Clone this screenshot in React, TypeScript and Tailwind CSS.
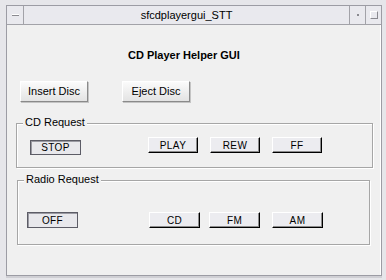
import React from 'react';

const font = "font-['Liberation_Sans',Arial,sans-serif]";

const raisedBtn =
  'h-[21px] w-[68px] text-[11px] text-black bg-gradient-to-b from-[#fbfbfb] to-[#e3e3e3] border border-t-white border-l-white border-r-[#8a8a8a] border-b-[#8a8a8a] shadow-[1px_1px_0_#c4c4c4] flex items-center justify-center';

const flatBtn =
  'h-[16px] text-[10px] tracking-[0.4px] text-black bg-[#ececf0] border border-t-white border-l-white border-r-black border-b-black shadow-[inset_-1px_-1px_0_#8c8c8c] flex items-center justify-center';

const pressedBtn =
  'h-[15px] text-[10px] tracking-[0.4px] text-black bg-[#e8e8ec] border border-[#5c5c66] shadow-[inset_1px_1px_0_#9a9aa2] flex items-center justify-center';

const GroupBox: React.FC<{ label: string; className: string; children: React.ReactNode }> = ({ label, className, children }) => (
  <div className={`relative border border-[#a6a6a6] shadow-[1px_1px_0_#ffffff,inset_1px_1px_0_#ffffff] ${className}`}>
    <span className="absolute -top-[8px] left-[6px] px-[2px] bg-[#f0f0f0] text-[11px] leading-[13px] text-black">
      {label}
    </span>
    {children}
  </div>
);

const App: React.FC = () => {
  return (
    <div className={`w-[386px] h-[280px] bg-[#e6e6ea] pt-[5px] pl-[6px] ${font}`}>
      <div className="w-[376px] h-[271px] border border-[#9c9ca4] shadow-[0_2px_0_#cfcfd4] flex flex-col">
        {/* Title bar */}
        <div className="h-[19px] flex bg-[#e9e9ee] border-b border-[#a2a2a8]">
          <div className="w-[17px] border-r border-[#a2a2a8] flex items-center justify-center">
            <div className="w-[7px] h-[2px] bg-white border-b border-[#8a8a90]" />
          </div>
          <div className="flex-1 flex items-center justify-center text-[11px] text-black">
            sfcdplayergui_STT
          </div>
          <div className="w-[16px] border-l border-[#a2a2a8] flex items-center justify-center">
            <div className="w-[2px] h-[2px] bg-[#8a8a90]" />
          </div>
          <div className="w-[16px] border-l border-[#a2a2a8] flex items-center justify-center">
            <div className="w-[8px] h-[8px] border border-t-white border-l-white border-r-[#8a8a90] border-b-[#8a8a90]" />
          </div>
        </div>

        {/* Content */}
        <div className="flex-1 bg-[#f0f0f0] border-r border-white flex flex-col">
          <div className="mt-[24px] pl-[121px] text-[11px] leading-[13px] font-bold text-black">
            CD Player Helper GUI
          </div>

          <div className="mt-[19px] flex pl-[13px] gap-[34px]">
            <button className={raisedBtn}>Insert Disc</button>
            <button className={raisedBtn}>Eject Disc</button>
          </div>

          <GroupBox label="CD Request" className="mt-[21px] ml-[9px] w-[357px] h-[45px]">
            <div className="flex items-start pt-[13px] pl-[13px]">
              <button className={`${pressedBtn} w-[51px] mt-[3px]`}>STOP</button>
              <button className={`${flatBtn} w-[50px] ml-[67px]`}>PLAY</button>
              <button className={`${flatBtn} w-[50px] ml-[12px]`}>REW</button>
              <button className={`${flatBtn} w-[50px] ml-[12px]`}>FF</button>
            </div>
          </GroupBox>

          <GroupBox label="Radio Request" className="mt-[12px] ml-[10px] w-[353px] h-[65px]">
            <div className="flex items-start pt-[31px] pl-[9px]">
              <button className={`${pressedBtn} w-[51px] h-[16px]`}>OFF</button>
              <button className={`${flatBtn} w-[51px] ml-[71px]`}>CD</button>
              <button className={`${flatBtn} w-[51px] ml-[9px]`}>FM</button>
              <button className={`${flatBtn} w-[51px] ml-[12px]`}>AM</button>
            </div>
          </GroupBox>
        </div>
      </div>
    </div>
  );
};

export default App;
